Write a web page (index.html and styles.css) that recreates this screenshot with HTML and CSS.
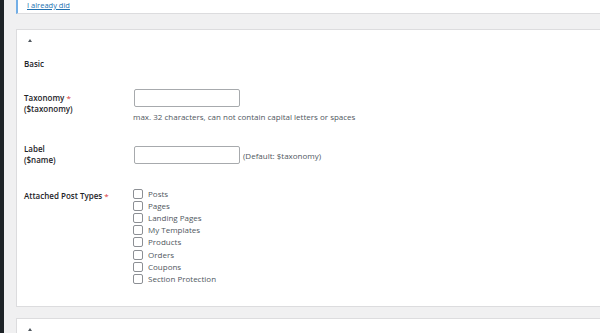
FILE: index.html
```html
<!DOCTYPE html>
<html>
<head>
<meta charset="utf-8">
<link rel="stylesheet" href="styles.css">
</head>
<body>
<div class="layout">
  <div class="sidebar"></div>
  <div class="main">
    <div class="notice"><a href="#" class="notice-link">I already did</a></div>

    <div class="panel">
      <div class="toggle"><svg width="4" height="3" viewBox="0 0 4 3"><path d="M2 0 L4 3 L0 3 Z" fill="#50575e"/></svg></div>
      <div class="section-title">Basic</div>

      <div class="row row-taxonomy">
        <div class="row-label">Taxonomy <span class="req">*</span><br>($taxonomy)</div>
        <div class="row-field">
          <input class="text-input" type="text">
          <div class="desc">max. 32 characters, can not contain capital letters or spaces</div>
        </div>
      </div>

      <div class="row row-name">
        <div class="row-label">Label<br>($name)</div>
        <div class="row-field inline">
          <input class="text-input" type="text">
          <span class="hint">(Default: $taxonomy)</span>
        </div>
      </div>

      <div class="row row-types">
        <div class="row-label">Attached Post Types <span class="req">*</span></div>
        <div class="row-field">
          <ul class="checks">
            <li><span class="box"></span>Posts</li>
            <li><span class="box"></span>Pages</li>
            <li><span class="box"></span>Landing Pages</li>
            <li><span class="box"></span>My Templates</li>
            <li><span class="box"></span>Products</li>
            <li><span class="box"></span>Orders</li>
            <li><span class="box"></span>Coupons</li>
            <li><span class="box"></span>Section Protection</li>
          </ul>
        </div>
      </div>
    </div>

    <div class="panel panel-next">
      <div class="toggle"><svg width="4" height="3" viewBox="0 0 4 3"><path d="M2 0 L4 3 L0 3 Z" fill="#50575e"/></svg></div>
    </div>
  </div>
</div>
</body>
</html>
```

FILE: styles.css
```css
html, body {
  margin: 0;
  padding: 0;
  width: 600px;
  height: 333px;
  overflow: hidden;
  background: #f0f0f1;
  font-family: "Open Sans", "Noto Sans", sans-serif;
  font-size: 8px;
  color: #1d2327;
}

.layout {
  display: flex;
  height: 333px;
  overflow: hidden;
}

.sidebar {
  width: 4px;
  flex: none;
  background: #1d2327;
}

.main {
  flex: 1;
  padding-left: 12px;
}

.notice {
  background: #fff;
  border-left: 2px solid #72aee6;
  border-bottom: 1px solid #dcdcde;
  padding: 0 0 3px 9px;
  height: 10px;
  line-height: 10px;
}

.notice-link {
  color: #2271b1;
  text-decoration: underline;
  font-size: 7.5px;
}

.panel {
  margin-top: 15px;
  background: #fff;
  border: 1px solid #dcdcde;
  border-right: none;
  padding: 0 0 21px 7px;
}

.toggle {
  height: 4px;
  margin-top: 9px;
  margin-left: 4px;
  line-height: 0;
}

.section-title {
  margin-top: 15px;
  line-height: 11px;
  font-weight: 600;
}

.row {
  display: grid;
  grid-template-columns: 109px 1fr;
  align-items: start;
}

.row-label {
  font-weight: 600;
  line-height: 11px;
}

.req {
  color: #d63638;
  font-weight: 400;
}

.row-taxonomy {
  margin-top: 20px;
}

.row-taxonomy .row-label {
  padding-top: 3px;
}

.row-name {
  margin-top: 21px;
}

.row-name .row-field {
  padding-top: 3px;
}

.row-types {
  margin-top: 23px;
}

.row-types .row-label {
  padding-top: 2px;
}

.row-field.inline {
  display: flex;
  align-items: center;
}

.text-input {
  box-sizing: border-box;
  display: block;
  width: 106px;
  height: 18px;
  margin: 0 0 0 1px;
  padding: 0 4px;
  border: 1px solid #a7aaad;
  border-radius: 2px;
  background: #fff;
  font: inherit;
}

.desc {
  margin-top: 4px;
  line-height: 11px;
  color: #50575e;
}

.hint {
  margin-left: 3px;
  color: #50575e;
  line-height: 11px;
}

.checks {
  list-style: none;
  margin: 0;
  padding: 0;
}

.checks li {
  display: flex;
  align-items: center;
  height: 12.1px;
  line-height: 12px;
  color: #50575e;
}

.box {
  box-sizing: border-box;
  width: 10px;
  height: 10px;
  margin-right: 5px;
  border: 1px solid #8c8f94;
  border-radius: 2px;
  background: #fff;
  flex: none;
}

.panel-next {
  margin-top: 11px;
  height: 14px;
  padding-bottom: 0;
  border-bottom: none;
}
```
